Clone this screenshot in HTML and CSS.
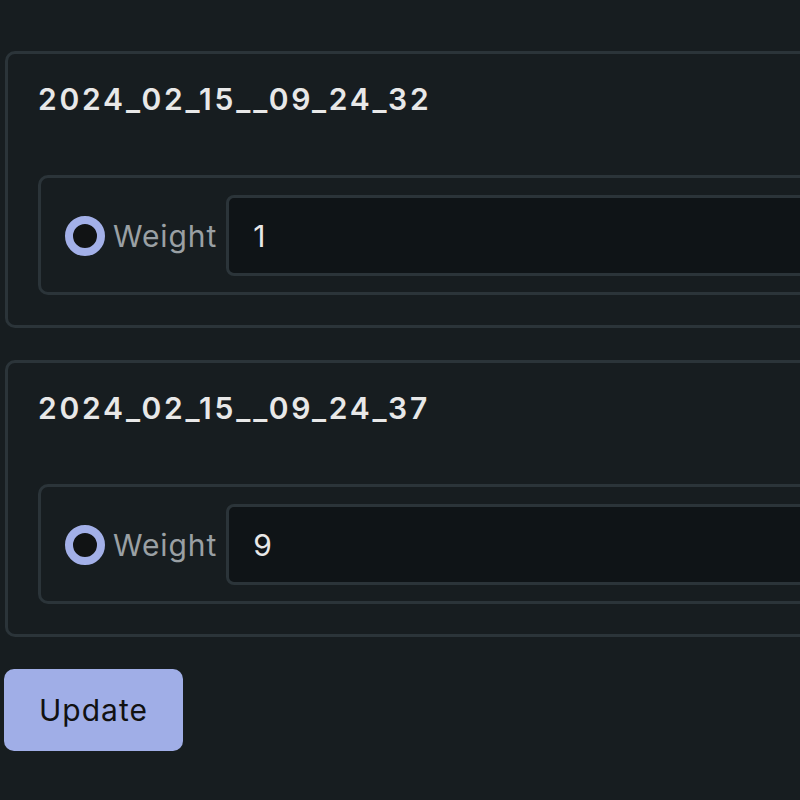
FILE: index.html
```html
<!DOCTYPE html>
<html>
<head>
<meta charset="utf-8">
<link rel="stylesheet" href="styles.css">
</head>
<body>
<div class="page">
  <div class="card">
    <div class="title">2024_02_15__09_24_32</div>
    <div class="field">
      <span class="radio"></span>
      <span class="label">Weight</span>
      <div class="input">1</div>
    </div>
  </div>
  <div class="card">
    <div class="title">2024_02_15__09_24_37</div>
    <div class="field">
      <span class="radio"></span>
      <span class="label">Weight</span>
      <div class="input">9</div>
    </div>
  </div>
  <button class="btn">Update</button>
</div>
</body>
</html>
```
FILE: styles.css
```css
html, body {
  margin: 0;
  padding: 0;
  background: #171d20;
  overflow: hidden;
  width: 800px;
  height: 800px;
}
.page {
  font-family: Inter, "Noto Sans", sans-serif;
  padding: 51px 0 0 4px;
  display: flex;
  flex-direction: column;
  align-items: flex-start;
  gap: 32px;
  width: 1100px;
}
.card {
  box-sizing: border-box;
  width: 1000px;
  margin-left: 1px;
  border: 3px solid #2b3439;
  border-radius: 10px;
  padding: 27px 30px 30px 30px;
  display: flex;
  flex-direction: column;
  gap: 58px;
}
.title {
  color: #e8e8e8;
  font-size: 30px;
  font-weight: 600;
  line-height: 36px;
  letter-spacing: 2.8px;
}
.field {
  border: 3px solid #2b3439;
  border-radius: 10px;
  padding: 17px 24px 16px 24px;
  display: flex;
  align-items: center;
}
.radio {
  box-sizing: border-box;
  width: 40px;
  height: 40px;
  border-radius: 50%;
  border: 8px solid #a3b0e8;
  background: #111314;
  flex: none;
}
.label {
  margin-left: 8px;
  color: #9aa0a4;
  font-size: 30px;
  line-height: 36px;
  letter-spacing: 0.9px;
}
.input {
  margin-left: 9px;
  flex: 1;
  height: 75px;
  box-sizing: content-box;
  border: 3px solid #2b3439;
  border-radius: 8px;
  background: #0f1417;
  color: #e8e8e8;
  font-size: 30px;
  display: flex;
  align-items: center;
  padding-left: 24px;
}
.btn {
  font-family: Inter, "Noto Sans", sans-serif;
  width: 179px;
  height: 82px;
  border: none;
  border-radius: 10px;
  background: #a0aee7;
  color: #111;
  font-size: 30px;
  letter-spacing: 1px;
  padding: 0;
  cursor: pointer;
}
```
